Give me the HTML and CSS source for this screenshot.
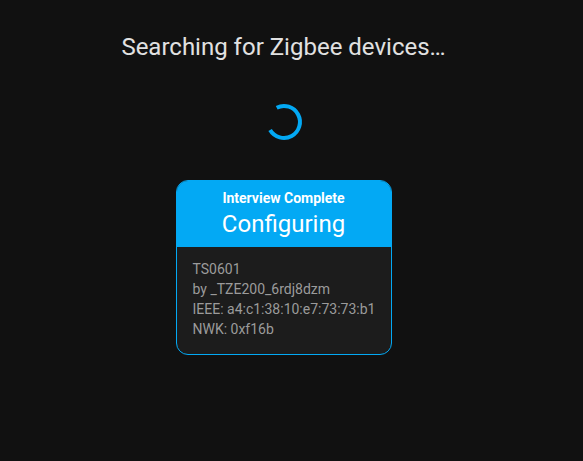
FILE: index.html
```html
<!DOCTYPE html>
<html>
<head>
<meta charset="utf-8">
<link rel="stylesheet" href="styles.css">
</head>
<body>
<div class="page">
  <h1 class="title">Searching for Zigbee devices…</h1>
  <svg class="spinner" width="40" height="40" viewBox="0 0 40 40">
    <path d="M 12.7 5.7 A 16 16 0 1 1 6.1 28" fill="none" stroke="#03a9f4" stroke-width="4"/>
  </svg>
  <div class="card">
    <div class="card-head">
      <div class="status">Interview Complete</div>
      <div class="stage">Configuring</div>
    </div>
    <div class="card-body">
      <div>TS0601</div>
      <div>by _TZE200_6rdj8dzm</div>
      <div>IEEE: a4:c1:38:10:e7:73:73:b1</div>
      <div>NWK: 0xf16b</div>
    </div>
  </div>
</div>
</body>
</html>
```
FILE: styles.css
```css
html, body {
  margin: 0;
  padding: 0;
  background: #111111;
  font-family: Roboto, "Noto Sans", sans-serif;
}
.page {
  display: flex;
  flex-direction: column;
  align-items: center;
  padding-top: 33px;
  padding-right: 16px;
}
.title {
  margin: 0;
  font-size: 24px;
  line-height: 28px;
  font-weight: 400;
  color: #e1e1e1;
}
.spinner {
  display: block;
  margin-top: 41px;
}
.card {
  margin-top: 38px;
  width: 214px;
  border: 1px solid #03a9f4;
  border-radius: 12px;
  overflow: hidden;
  background: #1c1c1c;
}
.card-head {
  background: #03a9f4;
  color: #ffffff;
  text-align: center;
  padding: 7px 0;
}
.status {
  font-size: 14px;
  font-weight: 700;
  line-height: 20px;
}
.stage {
  font-size: 24px;
  line-height: 32px;
}
.card-body {
  padding: 12px 14px 15px 16px;
  color: #9b9b9b;
  font-size: 14px;
  line-height: 20px;
}
```
